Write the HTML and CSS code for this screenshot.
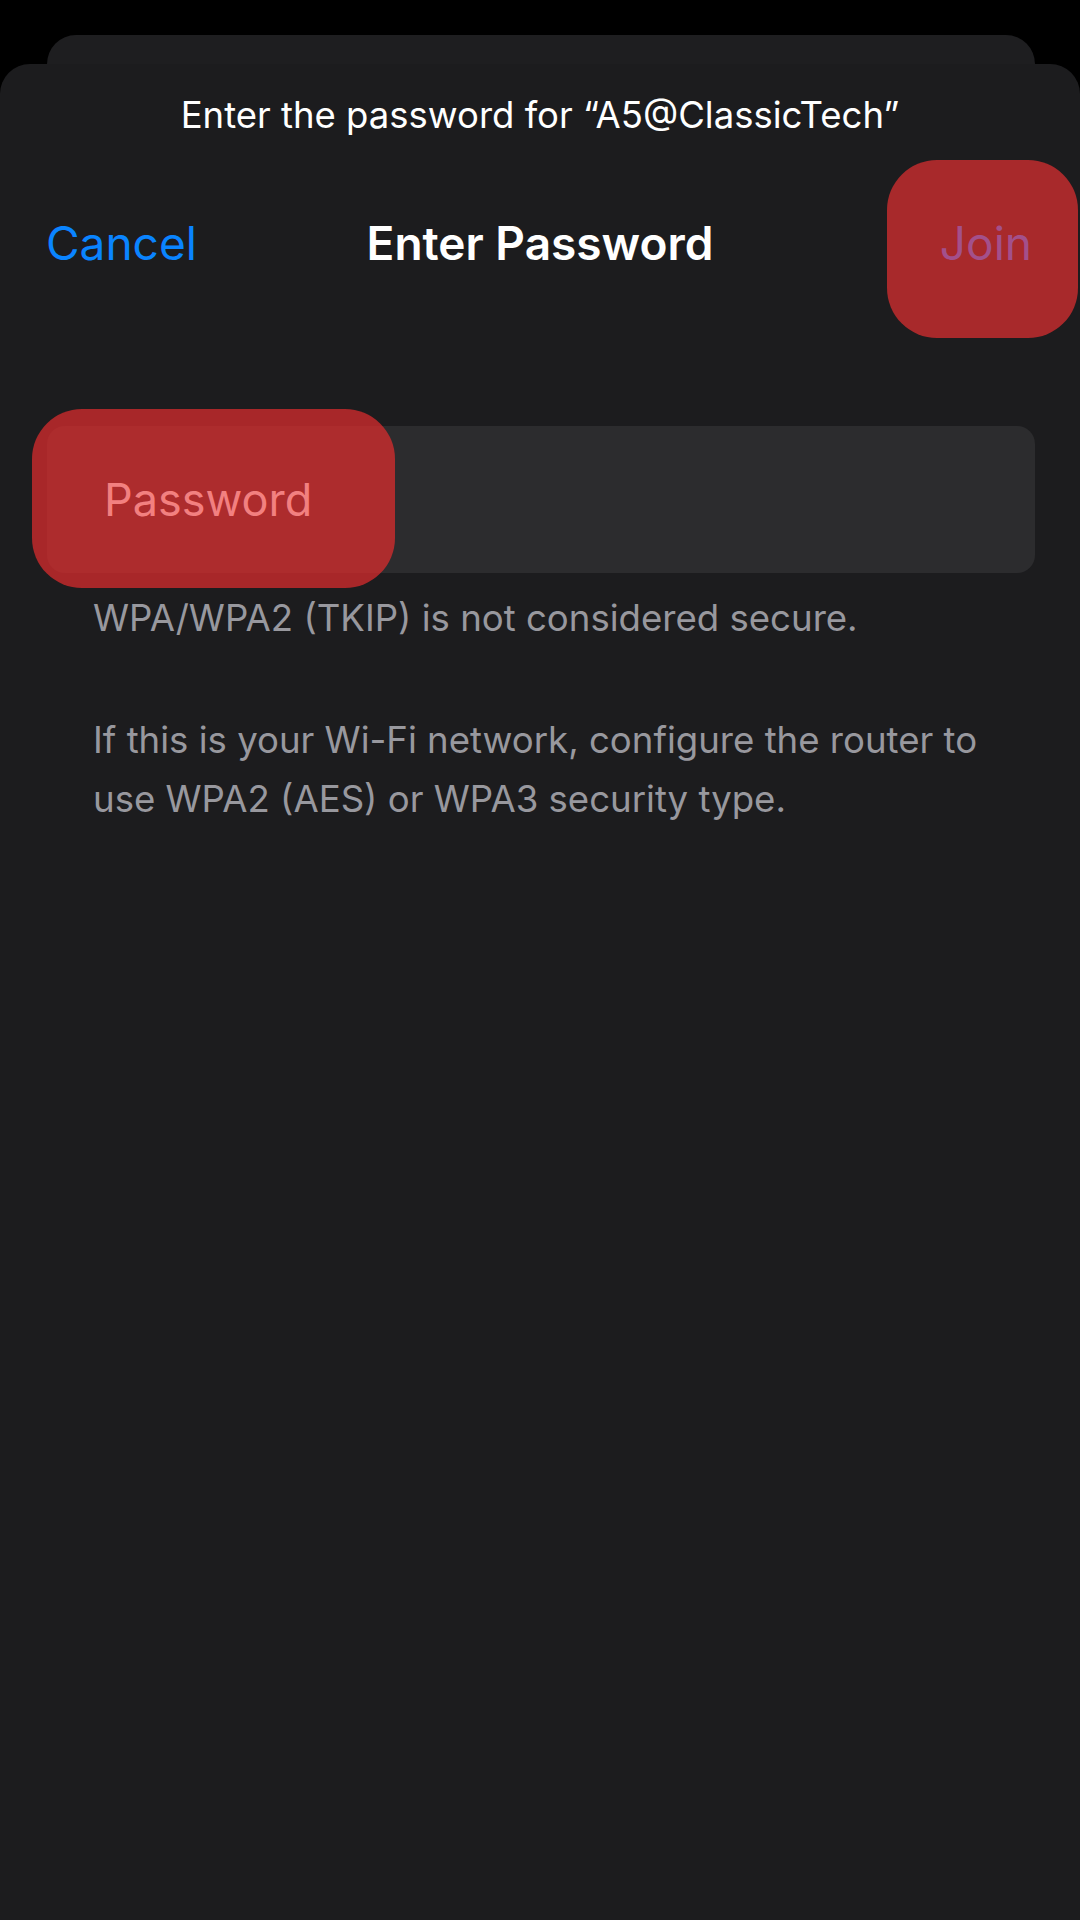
FILE: index.html
```html
<!DOCTYPE html>
<html lang="en">
<head>
    <meta charset="UTF-8">
    <title>Enter Password</title>
    <link rel="stylesheet" href="styles.css">
</head>
<body>
    <div class="screen">
        <div class="card-back"></div>  <!-- sheet behind -->
        <div class="sheet">
            <p class="prompt">Enter the password for “A5@ClassicTech”</p>
            <div class="nav">
                <span class="cancel">Cancel</span>
                <span class="nav-title">Enter Password</span>
                <span class="join">
                    <span class="mark mark-join"></span>
                    <span class="label">Join</span>
                </span>
            </div>
            <div class="field">
                <span class="mark mark-field"></span>
                <span class="placeholder">Password</span>
            </div>
            <div class="note">
                <p>WPA/WPA2 (TKIP) is not considered secure.</p>
                <p>If this is your Wi-Fi network, configure the router to use WPA2 (AES) or WPA3 security type.</p>
            </div>
        </div>
    </div>
</body>
</html>
```

FILE: styles.css
```css
body {
    margin: 0;
    background-color: #000;
    font-family: Inter, "Noto Sans", sans-serif;
}

.screen {
    width: 1080px;
    height: 1920px;
    display: flex;
    flex-direction: column;
    padding-top: 35px;
    box-sizing: border-box;
    overflow: hidden;
}

.card-back {
    height: 29px;
    margin: 0 45px 0 47px;
    background-color: #1e1e20;
    border-radius: 30px 30px 0 0;
}

.sheet {
    flex: 1;
    background-color: #1c1c1e;
    border-radius: 30px 30px 0 0;
}

.prompt {
    margin: 26px 0 0;
    line-height: 50px;
    font-size: 36.5px;
    color: #fff;
    text-align: center;
}

.nav {
    position: relative;
    display: flex;
    align-items: center;
    justify-content: space-between;
    height: 100px;
    margin-top: 53px;
    padding: 0 48px 0 46px;
}

.cancel {
    font-size: 46px;
    color: #0a84ff;
}

.nav-title {
    position: absolute;
    left: 0;
    right: 0;
    text-align: center;
    font-size: 46px;
    font-weight: 600;
    color: #fff;
}

.join {
    position: relative;
    font-size: 46px;
}

.label,
.placeholder {
    position: relative;  /* 하이라이트 위에 글자 */
}

.join .label {
    color: #a3508b;
}

/* red highlight marks lying over the screenshot */
.mark {
    position: absolute;
    background-color: rgba(228, 44, 46, 0.7);
    border-radius: 50px;
}

.mark-join {
    top: -55px;
    right: -46px;
    width: 191px;
    height: 178px;
    background-color: #a8292b;
}

.field {
    position: relative;
    display: flex;
    align-items: center;
    height: 147px;
    margin: 133px 45px 0 47px;
    padding-left: 57px;
    background-color: #2c2c2e;
    border-radius: 18px;
}

.mark-field {
    top: -17px;
    left: -15px;
    width: 363px;
    height: 179px;
}

.placeholder {
    font-size: 45px;
    color: #f28080;
}

.note {
    padding: 16px 70px 0 93px;
    font-size: 36.6px;
    line-height: 59px;
    color: #98989e;
}

.note p {
    margin: 0 0 63px;
}
```
